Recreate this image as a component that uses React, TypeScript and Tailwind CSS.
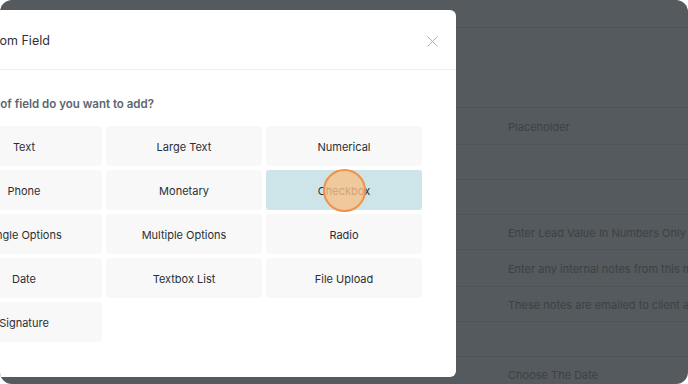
import React from 'react';
import { X } from 'lucide-react';

const fieldTypes = [
  'Text',
  'Large Text',
  'Numerical',
  'Phone',
  'Monetary',
  'Checkbox',
  'Single Options',
  'Multiple Options',
  'Radio',
  'Date',
  'Textbox List',
  'File Upload',
  'Signature',
];

const bgRows = [
  { h: 'h-[80px]', left: '', right: '' },
  { h: 'h-[37px]', left: '', right: 'Placeholder' },
  { h: 'h-[35px]', left: '', right: '' },
  { h: 'h-[35px]', left: '', right: '' },
  { h: 'h-[35px]', left: '', right: 'Enter Lead Value In Numbers Only' },
  { h: 'h-[37px]', left: '', right: 'Enter any internal notes from this meeting' },
  { h: 'h-[35px]', left: 'ent', right: 'These notes are emailed to client after' },
  { h: 'h-[35px]', left: '', right: '' },
  { h: 'h-[35px]', left: '', right: 'Choose The Date' },
];

export default function App() {
  return (
    <div className="w-[688px] h-[384px] bg-white" style={{ fontFamily: 'Inter, "Noto Sans", sans-serif' }}>
      <div className="relative w-full h-full rounded-[12px] overflow-hidden bg-[#545a5d]">
        {/* Dimmed page behind the modal */}
        <div className="flex flex-col">
          <div className="h-[28px] border-b border-[#4e5457]" />
          {bgRows.map((r, i) => (
            <div key={i} className={`${r.h} flex items-center pt-[2px] border-b border-[#4e5457] text-[11px] text-[#3c4245]`}>
              <div className="w-[452px] shrink-0 text-right">{r.left}</div>
              <div className="w-[56px] shrink-0" />
              <div className="whitespace-nowrap">{r.right}</div>
            </div>
          ))}
        </div>

        {/* Modal */}
        <div className="absolute top-[10px] left-[-78px] w-[534px] h-[367px] bg-white rounded-[6px] flex flex-col">
          <div className="h-[60px] shrink-0 flex items-center justify-between pt-[3px] pl-[23px] pr-[14px] border-b border-[#eef0f2]">
            <span className="text-[12.5px] text-[#2d3236]">Add Custom Field</span>
            <X size={19} strokeWidth={1.2} className="text-[#a9adb1]" />
          </div>
          <div className="px-[24px] pt-[26px]">
            <div className="text-[11.5px] font-semibold text-[#5b6670] ml-[-6px]">What type of field do you want to add?</div>
            <div className="mt-[13px] w-[476px] grid grid-cols-3 gap-[4px]">
              {fieldTypes.map((f) => (
                <div
                  key={f}
                  className={`relative h-[40px] pt-[2px] rounded-[3px] flex items-center justify-center text-[11px] text-[#2b2f33] ${
                    f === 'Checkbox' ? 'bg-[#cde4e9]' : 'bg-[#f8f8f8]'
                  }`}
                >
                  {f}
                  {f === 'Checkbox' && (
                    <div className="absolute left-[57px] top-[-1px] w-[43px] h-[43px] rounded-full bg-[#f7c188]/80 border-2 border-[#f0924a]" />
                  )}
                </div>
              ))}
            </div>
          </div>
        </div>
      </div>
    </div>
  );
}
